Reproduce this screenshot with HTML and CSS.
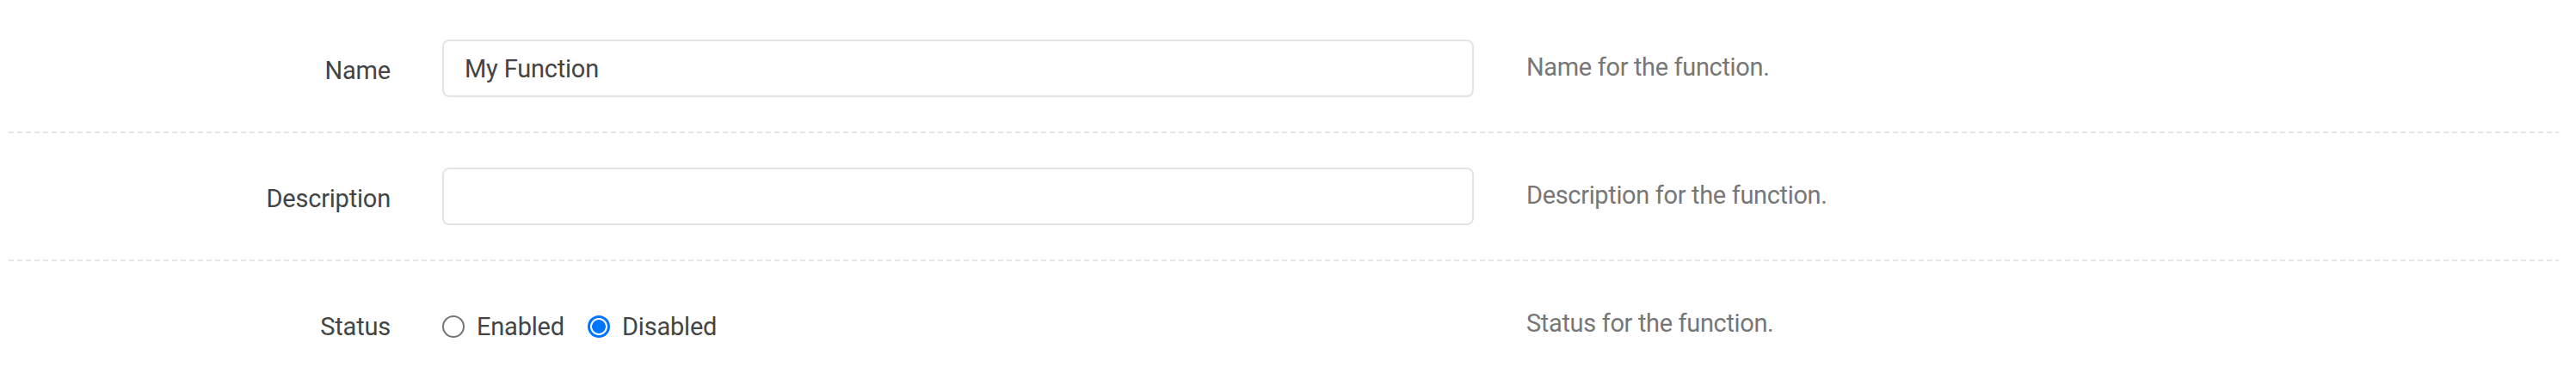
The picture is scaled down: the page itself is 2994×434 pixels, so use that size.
FILE: index.html
```html
<!DOCTYPE html>
<html lang="en">
<head>
<meta charset="utf-8">
<title>Function form</title>
<link rel="stylesheet" href="styles.css">
</head>
<body>
<form class="form">
  <div class="row row-divided">
    <label class="label" for="fn-name">Name</label>
    <input class="text-input" id="fn-name" type="text" value="My Function">
    <div class="help">Name for the function.</div>
  </div>
  <div class="row row-divided">
    <label class="label" for="fn-desc">Description</label>
    <input class="text-input" id="fn-desc" type="text" value="">
    <div class="help">Description for the function.</div>
  </div>
  <div class="row">
    <div class="label">Status</div>
    <div class="radios">
      <label class="radio-option"><input class="radio" type="radio" name="status" value="enabled"><span>Enabled</span></label>
      <label class="radio-option"><input class="radio" type="radio" name="status" value="disabled" checked><span>Disabled</span></label>
    </div>
    <div class="help">Status for the function.</div>
  </div>
</form>
</body>
</html>
```
FILE: styles.css
```css
html, body {
  margin: 0;
  padding: 0;
  background: #ffffff;
}

body {
  font-family: Roboto, "Liberation Sans", sans-serif;
  font-size: 29px;
  letter-spacing: -0.2px;
  color: #444444;
}

.form {
  padding: 6px 20px 0 10px;
}

.row {
  display: grid;
  grid-template-columns: 444px 1199px 1fr;
  grid-template-rows: 67px;
  column-gap: 60px;
  align-items: center;
  padding: 40px 0;
}

.row-divided {
  background-image: repeating-linear-gradient(to right, #e3e6ea 0 6px, transparent 6px 10px);
  background-size: 100% 2px;
  background-position: left bottom;
  background-repeat: no-repeat;
  padding-bottom: 42px;
}

.label {
  text-align: right;
  padding-top: 5px;
  color: #444444;
  line-height: 1.2;
}

.text-input {
  box-sizing: border-box;
  width: 100%;
  height: 67px;
  margin: 0;
  padding: 0 24px;
  border: 2px solid #e4e4e4;
  border-radius: 8px;
  font-family: inherit;
  font-size: 29px;
  letter-spacing: -0.2px;
  color: #444444;
  background: #ffffff;
  outline: none;
}

.help {
  padding-left: 1px;
  padding-bottom: 3px;
  color: #777777;
  letter-spacing: -0.35px;
  line-height: 1.2;
}

.radios {
  display: flex;
  align-items: center;
  gap: 27px;
  padding-top: 6px;
}

.radio-option {
  display: flex;
  align-items: center;
  gap: 14px;
  line-height: 1.2;
}

.radio {
  -webkit-appearance: none;
  appearance: none;
  box-sizing: border-box;
  width: 26px;
  height: 26px;
  margin: 0;
  border: 2px solid #767676;
  border-radius: 50%;
  background: #ffffff;
  flex: none;
}

.radio:checked {
  border-color: #0075ff;
  background: radial-gradient(circle, #0075ff 0 7.5px, #ffffff 8.2px 9.6px, #0075ff 10.3px);
}
```
